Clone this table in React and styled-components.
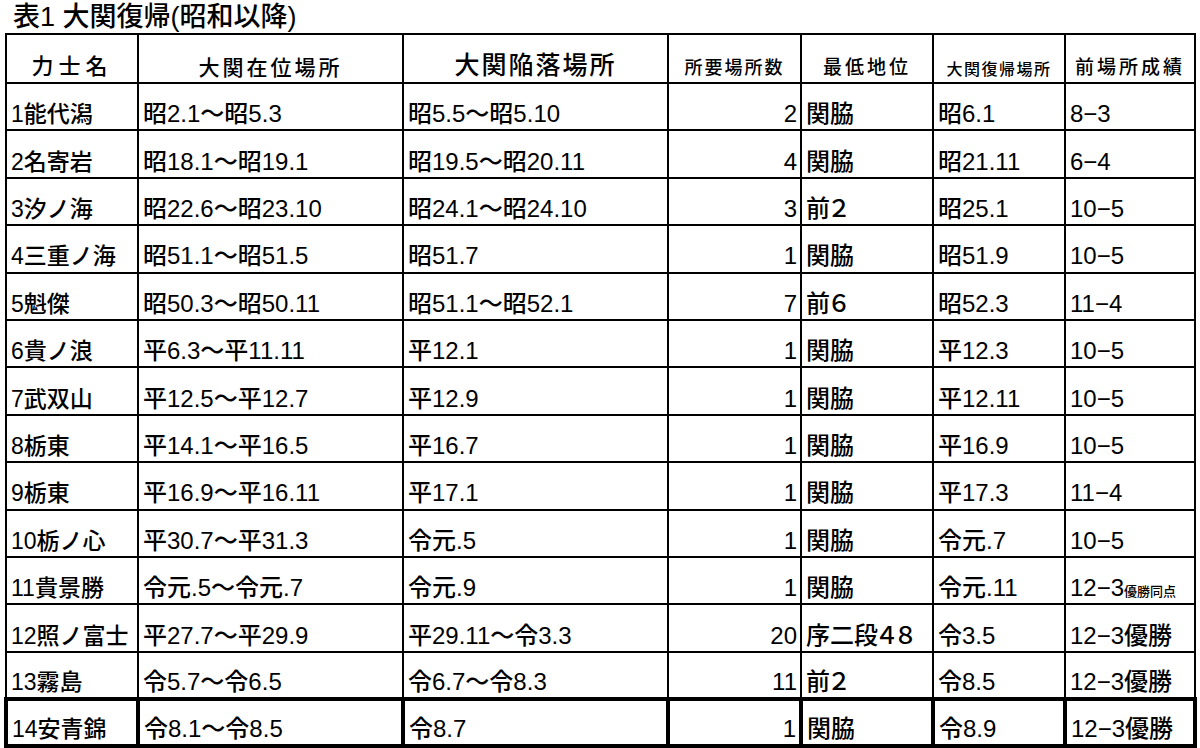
import React from 'react';
import styled, { createGlobalStyle } from 'styled-components';

const GlobalStyle = createGlobalStyle`
  html, body {
    margin: 0;
    padding: 0;
    background: #fff;
  }
  body {
    font-family: 'Liberation Sans', 'Noto Sans CJK JP', sans-serif;
    font-weight: 500;
    color: #000;
  }
`;

const rows = [
  ['1能代潟', '昭2.1～昭5.3', '昭5.5～昭5.10', '2', '関脇', '昭6.1', '8−3'],
  ['2名寄岩', '昭18.1～昭19.1', '昭19.5～昭20.11', '4', '関脇', '昭21.11', '6−4'],
  ['3汐ノ海', '昭22.6～昭23.10', '昭24.1～昭24.10', '3', '前２', '昭25.1', '10−5'],
  ['4三重ノ海', '昭51.1～昭51.5', '昭51.7', '1', '関脇', '昭51.9', '10−5'],
  ['5魁傑', '昭50.3～昭50.11', '昭51.1～昭52.1', '7', '前６', '昭52.3', '11−4'],
  ['6貴ノ浪', '平6.3～平11.11', '平12.1', '1', '関脇', '平12.3', '10−5'],
  ['7武双山', '平12.5～平12.7', '平12.9', '1', '関脇', '平12.11', '10−5'],
  ['8栃東', '平14.1～平16.5', '平16.7', '1', '関脇', '平16.9', '10−5'],
  ['9栃東', '平16.9～平16.11', '平17.1', '1', '関脇', '平17.3', '11−4'],
  ['10栃ノ心', '平30.7～平31.3', '令元.5', '1', '関脇', '令元.7', '10−5'],
  ['11貴景勝', '令元.5～令元.7', '令元.9', '1', '関脇', '令元.11', ['12−3', '優勝同点']],
  ['12照ノ富士', '平27.7～平29.9', '平29.11～令3.3', '20', '序二段４８', '令3.5', '12−3優勝'],
  ['13霧島', '令5.7～令6.5', '令6.7～令8.3', '11', '前２', '令8.5', '12−3優勝'],
  ['14安青錦', '令8.1～令8.5', '令8.7', '1', '関脇', '令8.9', '12−3優勝'],
];

const headers = [
  { label: '力士名', size: 22, spacing: 5 },
  { label: '大関在位場所', size: 21, spacing: 3 },
  { label: '大関陥落場所', size: 25, spacing: 2 },
  { label: '所要場所数', size: 18, spacing: 2 },
  { label: '最低地位', size: 19, spacing: 3 },
  { label: '大関復帰場所', size: 16, spacing: 1.5 },
  { label: '前場所成績', size: 19, spacing: 3 },
];

const widths = [132, 265, 265, 133, 132, 132, 130];

const Page = styled.div`
  padding: 0 0 0 4px;
  width: 1196px;
  height: 748px;
  overflow: hidden;
`;

const Title = styled.div`
  height: 33px;
  padding-left: 9px;
  font-size: 27px;
  line-height: 1;
  display: flex;
  align-items: flex-end;
  box-sizing: border-box;
  padding-bottom: 2px;
  white-space: nowrap;
`;

const Table = styled.table`
  border-collapse: collapse;
  table-layout: fixed;
  width: 1190px;
`;

const HeadRow = styled.tr`
  height: 49px;
`;

const HeadCell = styled.th`
  border: 2px solid #000;
  font-weight: 500;
  font-size: ${p => p.$size}px;
  letter-spacing: ${p => p.$spacing}px;
  text-align: center;
  vertical-align: bottom;
  padding: 0 0 3px;
  white-space: nowrap;
  line-height: 1.1;
`;

const Row = styled.tr`
  height: 47.4px;
`;

const Cell = styled.td`
  border: 2px solid #000;
  border-width: ${p => (p.$last ? '4px' : '2px')};
  font-size: ${p => (p.$name ? 23 : 24)}px;
  font-feature-settings: ${p => (p.$rank ? "'palt'" : 'normal')};
  text-align: ${p => (p.$num ? 'right' : 'left')};
  vertical-align: bottom;
  padding: 0 ${p => (p.$num ? '3px' : '0')} 3px ${p => (p.$num ? '0' : '4px')};
  white-space: nowrap;
  line-height: 1.05;
  overflow: hidden;
`;

const Small = styled.span`
  font-size: 13px;
`;

export default function App() {
  return (
    <Page>
      <GlobalStyle />
      <Title>表1 大関復帰(昭和以降)</Title>
      <Table>
        <colgroup>
          {widths.map((w, i) => (
            <col key={i} style={{ width: w }} />
          ))}
        </colgroup>
        <thead>
          <HeadRow>
            {headers.map(h => (
              <HeadCell key={h.label} $size={h.size} $spacing={h.spacing}>
                {h.label}
              </HeadCell>
            ))}
          </HeadRow>
        </thead>
        <tbody>
          {rows.map((r, i) => {
            const last = i === rows.length - 1;
            return (
              <Row key={i}>
                {r.map((c, j) => (
                  <Cell
                    key={j}
                    $name={j === 0}
                    $num={j === 3}
                    $rank={j === 4}
                    $last={last}
                  >
                    {Array.isArray(c) ? (
                      <>
                        {c[0]}
                        <Small>{c[1]}</Small>
                      </>
                    ) : (
                      c
                    )}
                  </Cell>
                ))}
              </Row>
            );
          })}
        </tbody>
      </Table>
    </Page>
  );
}
